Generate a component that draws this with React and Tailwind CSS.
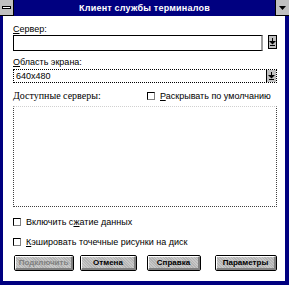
function DownArrow() {
  return (
    <svg width="7" height="9" viewBox="0 0 7 9">
      <rect x="3" y="0" width="1" height="3" fill="#000" />
      <path d="M0 3 H7 L3.5 6.5 Z" fill="#000" />
      <rect x="1" y="7" width="5" height="1" fill="#000" />
    </svg>
  )
}

function Checkbox({ children }) {
  return (
    <div className="flex items-center gap-[5px] h-[10px]">
      <span className="w-[8px] h-[8px] border border-black border-r-[#808080] border-b-[#808080] bg-white" />
      <span className="leading-[10px]">{children}</span>
    </div>
  )
}

function Btn({ children, w, disabled }) {
  return (
    <div className={`h-[16px] ${w} rounded-[2px] border border-black bg-[#c0c0c0] flex`}>
      <div className="flex-1 flex items-center justify-center border-t border-l border-white border-b-2 border-r-2 border-b-[#808080] border-r-[#808080] bg-[repeating-linear-gradient(45deg,#c8c8c8_0px,#c8c8c8_1px,#b4b4b4_1px,#b4b4b4_2px)]">
        <span className={`text-[8px] leading-[8px] font-bold ${disabled ? 'text-[#808080]' : 'text-black'}`}>{children}</span>
      </div>
    </div>
  )
}

export default function App() {
  return (
    <div className="w-[289px] h-[285px] flex flex-col bg-[#000080] text-[9px] text-black" style={{ fontFamily: '"Liberation Sans", Arial, sans-serif' }}>
      {/* title bar */}
      <div className="h-[16px] flex items-stretch">
        <div className="w-[14px] bg-[#c0c0c0] border-r border-b border-black flex items-center justify-center">
          <div className="w-[9px] h-[3px] bg-white border border-black" />
        </div>
        <div className="flex-1 flex items-center justify-center text-white font-bold text-[9px] leading-[10px] tracking-[0.2px]">
          Клиент службы терминалов
        </div>
        <div className="w-[14px] bg-[#c0c0c0] border-l border-b border-black flex items-center justify-center">
          <svg width="7" height="4" viewBox="0 0 7 4"><path d="M0 0 H7 L3.5 4 Z" fill="#000" /></svg>
        </div>
      </div>

      {/* body */}
      <div className="flex-1 ml-[3px] mr-[4px] mb-[4px] bg-white flex flex-col pl-[10px] pr-[8px]">
        <div className="mt-[8px] h-[10px] leading-[10px]"><span className="underline">С</span>ервер:</div>
        <div className="mt-[1px] flex items-start h-[16px]">
          <div className="w-[250px] h-[16px] border border-black border-r-2 border-r-[#a0a0a0] bg-white" />
          <div className="ml-[5px] w-[9px] h-[14px] border border-black bg-[#c0c0c0] flex items-center justify-center">
            <DownArrow />
          </div>
        </div>

        <div className="mt-[6px] h-[10px] leading-[10px]"><span className="underline">О</span>бласть экрана:</div>
        <div className="mt-[2px] h-[14px] border border-dotted border-black flex">
          <div className="flex-1 flex items-center pl-[2px] leading-[10px]">640x480</div>
          <div className="w-[10px] border-l border-black bg-[#c0c0c0] flex items-center justify-center">
            <DownArrow />
          </div>
        </div>

        <div className="mt-[8px] h-[10px] flex items-center">
          <div className="w-[134px] leading-[10px] text-[10px] text-black" style={{ fontFamily: '"Liberation Serif", "Times New Roman", serif' }}>
            <span className="underline">Д</span>оступные серверы:
          </div>
          <Checkbox><span className="underline">Р</span>аскрывать по умолчанию</Checkbox>
        </div>

        <div className="mt-[5px] h-[101px] border border-dotted border-[#404040] border-t-[#d0d0d0] bg-white" />

        <div className="mt-[10px]">
          <Checkbox>Включить с<span className="underline">ж</span>атие данных</Checkbox>
        </div>
        <div className="mt-[10px]">
          <Checkbox><span className="underline">К</span>эшировать точечные рисунки на диск</Checkbox>
        </div>

        <div className="mt-[8px] flex items-start">
          <div className="ml-[1px]"><Btn w="w-[60px]" disabled>Подключить</Btn></div>
          <div className="ml-[6px]"><Btn w="w-[57px]">Отмена</Btn></div>
          <div className="ml-[10px]"><Btn w="w-[54px]">Справка</Btn></div>
          <div className="ml-[14px]"><Btn w="w-[62px]">Параметры</Btn></div>
        </div>
      </div>
    </div>
  )
}
